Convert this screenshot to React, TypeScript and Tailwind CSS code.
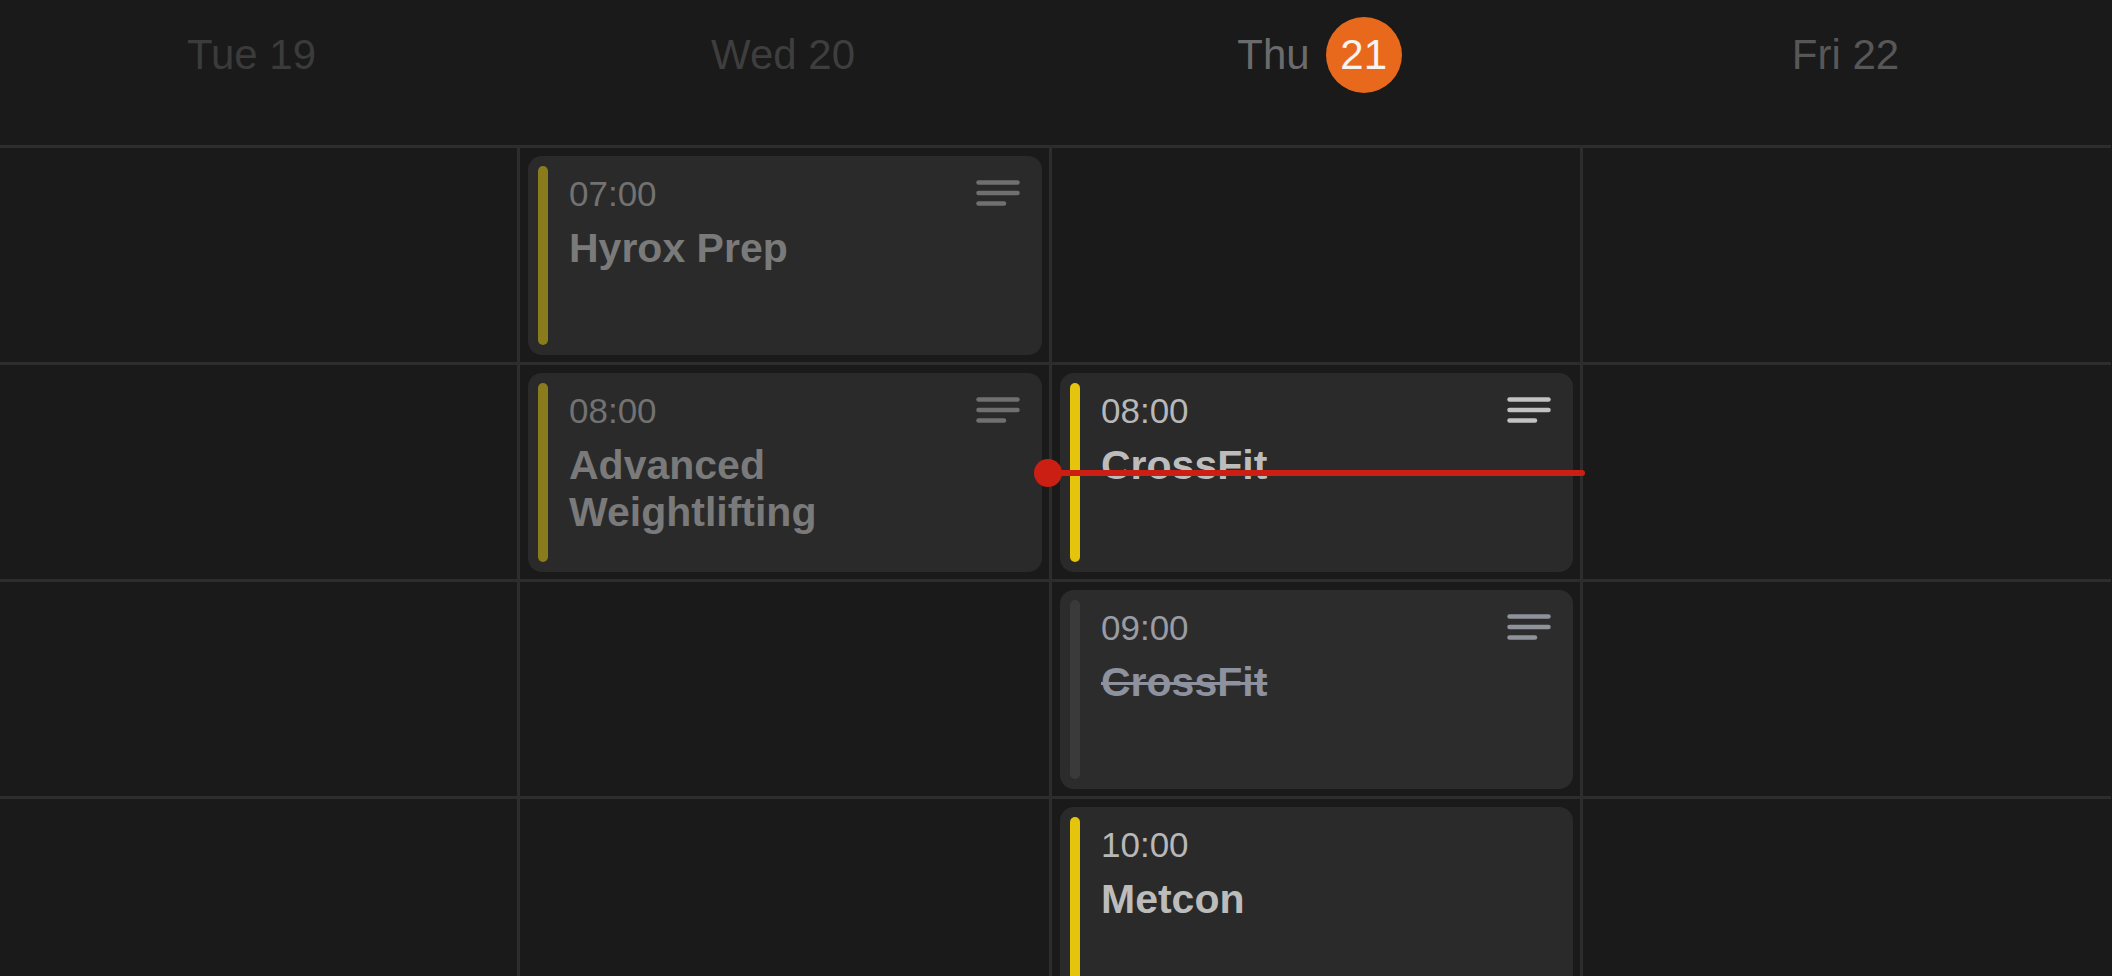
import React from "react";

type Variant = "past" | "active" | "cancelled";
type Ev = { time: string; title: string; variant: Variant; menu?: boolean };

const Menu = ({ color }: { color: string }) => (
  <svg width="44" height="26" viewBox="0 0 44 26" className="absolute right-[22px] top-[24px]">
    <g stroke={color} strokeWidth="4.5" strokeLinecap="round">
      <line x1="2.5" y1="2.5" x2="41.5" y2="2.5" />
      <line x1="2.5" y1="13" x2="41.5" y2="13" />
      <line x1="2.5" y1="23.5" x2="28" y2="23.5" />
    </g>
  </svg>
);

const Card = ({ ev }: { ev: Ev }) => {
  const v = ev.variant;
  const bar = v === "past" ? "bg-[#8a7b1c]" : v === "active" ? "bg-[#e5c40d]" : "bg-[#3a3a3b]";
  const time = v === "past" ? "text-[#727272]" : v === "active" ? "text-[#b8b8b8]" : "text-[#9a9ca3]";
  const title =
    v === "past"
      ? "text-[#7a7a7a]"
      : v === "active"
      ? "text-[#bcbcbc]"
      : "text-[#8e919e] line-through decoration-[3px] decoration-[#8e919e]";
  const menu = v === "past" ? "#707070" : v === "active" ? "#c2c2c2" : "#8f929b";
  return (
    <div
      className={`relative flex h-[199px] rounded-[14px] p-[10px] ${
        v === "cancelled" ? "bg-[#2c2c2d]" : "bg-[#2a2a2a]"
      }`}
    >
      <div className={`w-[10px] shrink-0 self-stretch rounded-full ${bar}`} />
      <div className="ml-[21px] mr-[80px] flex min-w-0 flex-1 flex-col pt-[8px]">
        <div className={`text-[35px] leading-[40px] font-normal ${time}`}>{ev.time}</div>
        <div className={`mt-[11px] text-[41px] leading-[47px] font-bold ${title}`}>{ev.title}</div>
      </div>
      {ev.menu !== false && <Menu color={menu} />}
    </div>
  );
};

const GRID = "grid grid-cols-[531px_532px_531px_531px]";

const Row = ({ cells }: { cells: (Ev | null)[] }) => (
  <div className={`${GRID} h-[217px] border-t-[3px] border-[#2d2d2d]`}>
    {cells.map((c, i) => (
      <div
        key={i}
        className={`h-[214px] pt-[8px] pb-[7px] pl-[8px] pr-[7px] ${i > 0 ? "border-l-[3px] border-[#2d2d2d]" : ""}`}
      >
        {c && <Card ev={c} />}
      </div>
    ))}
  </div>
);

export default function App() {
  return (
    <div
      className="h-[976px] w-full overflow-hidden bg-[#1a1a1a]"
      style={{ fontFamily: '"Liberation Sans", Arial, sans-serif' }}
    >
      <div className="relative ml-[-14px] w-[2125px]">
        <div className={`${GRID} h-[145px] pb-[35px]`}>
          <div className="flex items-center justify-center text-[42px] leading-none text-[#3b3b3b]">Tue 19</div>
          <div className="flex items-center justify-center text-[42px] leading-none text-[#3e3e3e]">Wed 20</div>
          <div className="flex items-center justify-center gap-[16px] pl-[10px] text-[42px] leading-none text-[#6b6b6b]">
            <span>Thu</span>
            <span className="flex h-[76px] w-[76px] items-center justify-center rounded-full bg-[#e8691c] text-[#f7f3ef]">
              21
            </span>
          </div>
          <div className="flex items-center justify-center text-[42px] leading-none text-[#575757]">Fri 22</div>
        </div>

        <Row cells={[null, { time: "07:00", title: "Hyrox Prep", variant: "past" }, null, null]} />
        <Row
          cells={[
            null,
            { time: "08:00", title: "Advanced Weightlifting", variant: "past" },
            { time: "08:00", title: "CrossFit", variant: "active" },
            null,
          ]}
        />
        <Row cells={[null, null, { time: "09:00", title: "CrossFit", variant: "cancelled" }, null]} />
        <Row cells={[null, null, { time: "10:00", title: "Metcon", variant: "active", menu: false }, null]} />

        <div className="absolute left-[1062px] top-[470px] h-[6px] w-[537px] rounded-r-full bg-[#cc1f14]" />
        <div className="absolute left-[1048px] top-[459px] h-[28px] w-[28px] rounded-full bg-[#cc1f14]" />
      </div>
    </div>
  );
}
